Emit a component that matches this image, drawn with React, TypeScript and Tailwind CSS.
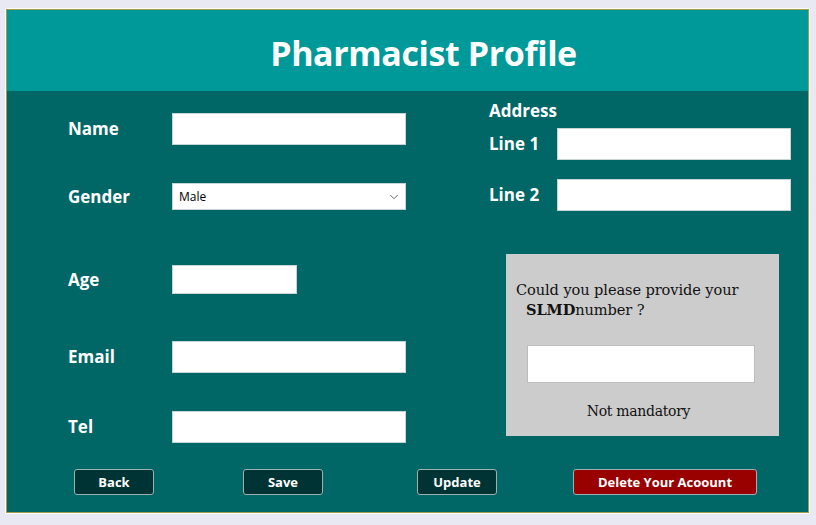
import { ChevronDown } from 'lucide-react';

const sans = { fontFamily: '"Open Sans", "Noto Sans", sans-serif' };

const Field = ({ label, top, w = 'w-[234px]', h = 'h-[32px]' }: { label: string; top: string; w?: string; h?: string }) => (
    <div className={`flex items-center ${top}`}>
        <div className="w-[104px] text-[17px] font-bold text-white">{label}</div>
        <input className={`${w} ${h} border border-[#c8d4d4] bg-white outline-none`} />
    </div>
);

const Btn = ({ label, cls }: { label: string; cls: string }) => (
    <button className={`h-[26px] rounded-[3px] border border-[#9fb0b0] pt-[2px] text-[13px] font-bold text-white ${cls}`}>
        {label}
    </button>
);

export default function App() {
    return (
        <div className="h-[525px] w-[816px] bg-[#e9e9f3] pl-[5px] pt-[8px]" style={sans}>
            <div className="w-[805px] border border-[#fdfdfd]">
                <div className="h-[504px] w-[803px] border border-[#a49b48]">
                    {/* header */}
                    <div className="flex h-[81px] items-center justify-center bg-[#009999] pl-[32px] pt-[5px]">
                        <h1 className="text-[34px] font-bold tracking-[-0.4px] text-white">Pharmacist Profile</h1>
                    </div>

                    {/* body */}
                    <div className="h-[421px] bg-[#006666]">
                        <div className="flex">
                            <div className="ml-[61px] w-[338px]">
                                <Field label="Name" top="mt-[22px]" />
                                <div className="mt-[38px] flex items-center">
                                    <div className="w-[104px] text-[17px] font-bold text-white">Gender</div>
                                    <div className="flex h-[27px] w-[234px] items-center justify-between border border-[#c8d4d4] bg-white pl-[6px] pr-[4px]">
                                        <span className="text-[12px] text-black">Male</span>
                                        <ChevronDown size={14} strokeWidth={1.3} className="text-[#444]" />
                                    </div>
                                </div>
                                <Field label="Age" top="mt-[55px]" w="w-[125px]" h="h-[29px]" />
                                <Field label="Email" top="mt-[47px]" />
                                <Field label="Tel" top="mt-[38px]" />
                            </div>

                            <div className="ml-[83px]">
                                <div className="pt-[8px] text-[17px] font-bold leading-[23px] text-white">Address</div>
                                <div className="mt-[6px] flex items-center">
                                    <div className="w-[68px] text-[17px] font-bold text-white">Line 1</div>
                                    <input className="h-[32px] w-[234px] border border-[#c8d4d4] bg-white outline-none" />
                                </div>
                                <div className="mt-[19px] flex items-center">
                                    <div className="w-[68px] text-[17px] font-bold text-white">Line 2</div>
                                    <input className="h-[32px] w-[234px] border border-[#c8d4d4] bg-white outline-none" />
                                </div>

                                <div
                                    className="ml-[17px] mt-[43px] h-[182px] w-[273px] bg-[#cccccc] pt-[26px] text-[#111]"
                                    style={{ fontFamily: '"DejaVu Serif", serif' }}
                                >
                                    <div className="pl-[10px] text-[14.6px] leading-[20px] tracking-[-0.1px]">Could you please provide your</div>
                                    <div className="pl-[20px] text-[14.6px] leading-[20px] tracking-[-0.1px]">
                                        <b>SLMD</b>number ?
                                    </div>
                                    <input className="ml-[21px] mt-[25px] h-[38px] w-[228px] border border-[#bdbdbd] bg-white outline-none" />
                                    <div className="mt-[19px] pr-[8px] text-center text-[14px] leading-[18px] tracking-[-0.3px]">Not mandatory</div>
                                </div>
                            </div>
                        </div>

                        <div className="mt-[26px] flex">
                            <Btn label="Back" cls="ml-[67px] w-[80px] bg-[#003333]" />
                            <Btn label="Save" cls="ml-[89px] w-[80px] bg-[#003333]" />
                            <Btn label="Update" cls="ml-[94px] w-[80px] bg-[#003333]" />
                            <Btn label="Delete Your Acoount" cls="ml-[76px] w-[184px] bg-[#990000]" />
                        </div>
                    </div>
                </div>
            </div>
        </div>
    );
}
